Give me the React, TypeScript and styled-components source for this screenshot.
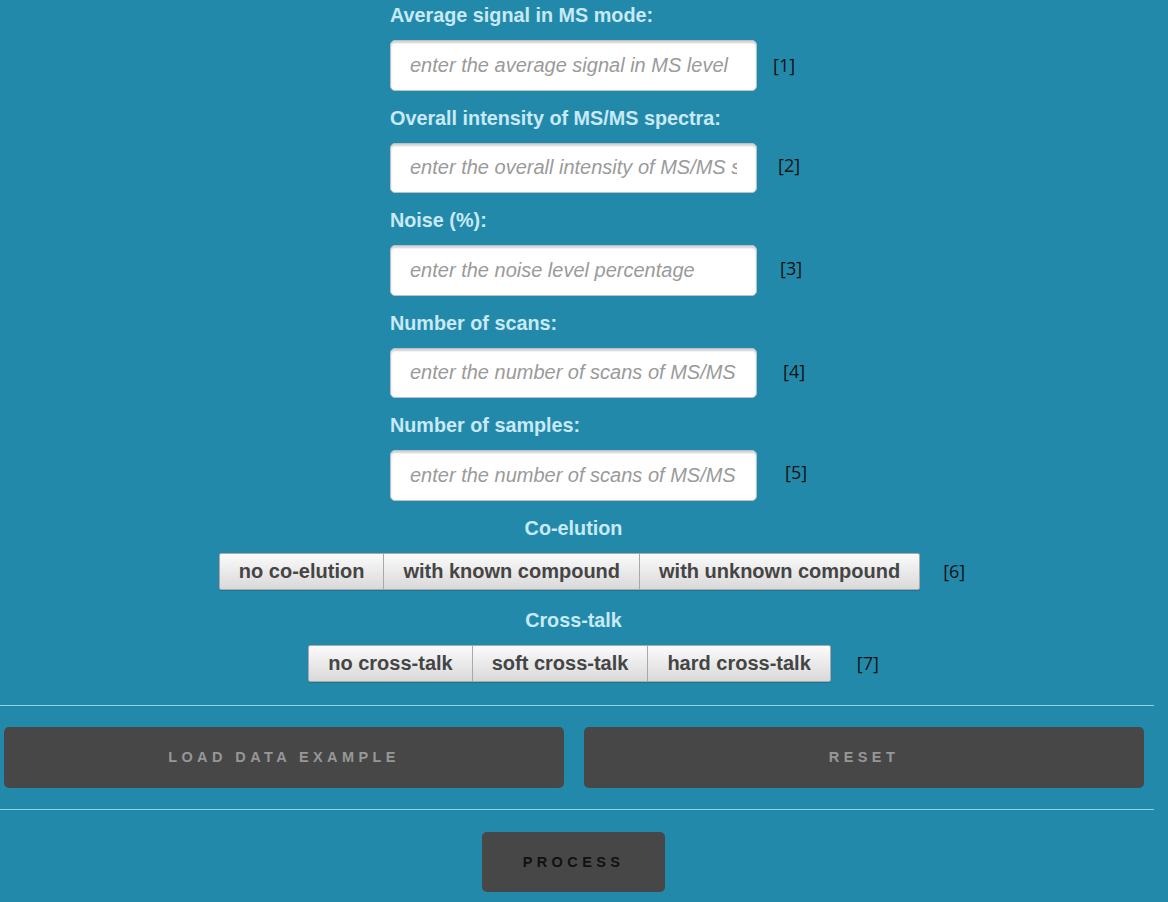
import React from "react";
import styled, { createGlobalStyle } from "styled-components";

const Global = createGlobalStyle`
  html, body {
    margin: 0;
    padding: 0;
    background: #2389aa;
    font-family: "Liberation Sans", Arial, sans-serif;
  }
`;

const Page = styled.div`
  width: 1147px;
  padding-top: 5px;
  display: flex;
  flex-direction: column;
`;

const FieldGrid = styled.div`
  display: grid;
  grid-template-columns: 1fr 367px 1fr;
  align-items: center;
  margin-bottom: 17px;
`;

const Label = styled.label`
  grid-column: 2;
  display: block;
  font-size: 19.8px;
  line-height: 20px;
  font-weight: bold;
  color: #c8e9f6;
  margin-bottom: 15px;
  white-space: nowrap;
`;

const Input = styled.input`
  grid-column: 2;
  box-sizing: border-box;
  width: 367px;
  height: 50.5px;
  border: 1px solid #b9c3c7;
  border-radius: 5px;
  background: #fff;
  box-shadow: inset 0 2px 2px rgba(0, 0, 0, 0.18);
  padding: 0 19px;
  font-family: "Liberation Sans", Arial, sans-serif;
  font-size: 20px;
  font-style: italic;
  color: #333;
  outline: none;
  &::placeholder {
    color: #9a9a9a;
  }
`;

const Note = styled.span<{ $offset: number; $dy?: number }>`
  grid-column: 3;
  font-family: "Open Sans", "DejaVu Sans", sans-serif;
  font-size: 18px;
  color: #111;
  margin-left: ${(p) => p.$offset}px;
  position: relative;
  top: ${(p) => p.$dy ?? 0}px;
`;

const Heading = styled.div`
  text-align: center;
  font-size: 19.8px;
  line-height: 20px;
  font-weight: bold;
  color: #c8e9f6;
  margin-bottom: 15px;
`;

const GroupRow = styled.div<{ $shift: number; $after: number }>`
  display: grid;
  grid-template-columns: 1fr auto 1fr;
  align-items: center;
  margin-right: ${(p) => p.$shift}px;
  margin-bottom: ${(p) => p.$after}px;
`;

const Group = styled.div`
  grid-column: 2;
  display: flex;
  border: 1px solid #a9a9a9;
  border-radius: 2px;
  overflow: hidden;
  box-shadow: 0 1px 1px rgba(0, 0, 0, 0.15);
`;

const Segment = styled.button<{ $first?: boolean }>`
  height: 35px;
  padding: 0 19px;
  border: none;
  border-left: ${(p) => (p.$first ? "none" : "1px solid #a8a8a8")};
  background: linear-gradient(#fbfbfb, #d9d9d9);
  font-family: "Liberation Sans", Arial, sans-serif;
  font-weight: bold;
  font-size: 20px;
  color: #454545;
  cursor: pointer;
  white-space: nowrap;
`;

const GroupNote = styled.span<{ $offset: number }>`
  grid-column: 3;
  font-family: "Open Sans", "DejaVu Sans", sans-serif;
  font-size: 18px;
  color: #111;
  margin-left: ${(p) => p.$offset}px;
`;

const Rule = styled.hr`
  width: 1154px;
  border: none;
  border-top: 1px solid #8fd3ec;
  margin: 0;
`;

const ActionRow = styled.div`
  display: grid;
  grid-template-columns: 560px 560px;
  gap: 20px;
  padding: 21px 0 21px 4px;
`;

const DarkButton = styled.button<{ $ink: string }>`
  height: 61px;
  border: none;
  border-radius: 5px;
  background: #474747;
  color: ${(p) => p.$ink};
  font-family: "Liberation Sans", Arial, sans-serif;
  font-weight: bold;
  font-size: 14.5px;
  letter-spacing: 4.4px;
  text-transform: uppercase;
  cursor: pointer;
`;

const ProcessRow = styled.div`
  display: flex;
  justify-content: center;
  padding-top: 22px;
`;

const ProcessButton = styled(DarkButton)`
  width: 183px;
  height: 60px;
`;

const fields = [
  { label: "Average signal in MS mode:", ph: "enter the average signal in MS level", note: "[1]", off: 16, dy: 0 },
  { label: "Overall intensity of MS/MS spectra:", ph: "enter the overall intensity of MS/MS spectra", note: "[2]", off: 21, dy: -3 },
  { label: "Noise (%):", ph: "enter the noise level percentage", note: "[3]", off: 23, dy: -2 },
  { label: "Number of scans:", ph: "enter the number of scans of MS/MS", note: "[4]", off: 26, dy: -2 },
  { label: "Number of samples:", ph: "enter the number of scans of MS/MS", note: "[5]", off: 28, dy: -3 },
];

export default function App() {
  return (
    <>
      <Global />
      <Page>
        {fields.map((f) => (
          <FieldGrid key={f.note}>
            <Label>{f.label}</Label>
            <span />
            <span />
            <Input placeholder={f.ph} />
            <Note $offset={f.off} $dy={f.dy}>{f.note}</Note>
          </FieldGrid>
        ))}
        <Heading>Co-elution</Heading>
        <GroupRow $shift={8} $after={20}>
          <Group>
            <Segment $first>no co-elution</Segment>
            <Segment>with known compound</Segment>
            <Segment>with unknown compound</Segment>
          </Group>
          <GroupNote $offset={23}>[6]</GroupNote>
        </GroupRow>
        <Heading>Cross-talk</Heading>
        <GroupRow $shift={8} $after={23}>
          <Group>
            <Segment $first>no cross-talk</Segment>
            <Segment>soft cross-talk</Segment>
            <Segment>hard cross-talk</Segment>
          </Group>
          <GroupNote $offset={26}>[7]</GroupNote>
        </GroupRow>
        <Rule />
        <ActionRow>
          <DarkButton $ink="#979797">Load data example</DarkButton>
          <DarkButton $ink="#979797">Reset</DarkButton>
        </ActionRow>
        <Rule />
        <ProcessRow>
          <ProcessButton $ink="#111">Process</ProcessButton>
        </ProcessRow>
      </Page>
    </>
  );
}
